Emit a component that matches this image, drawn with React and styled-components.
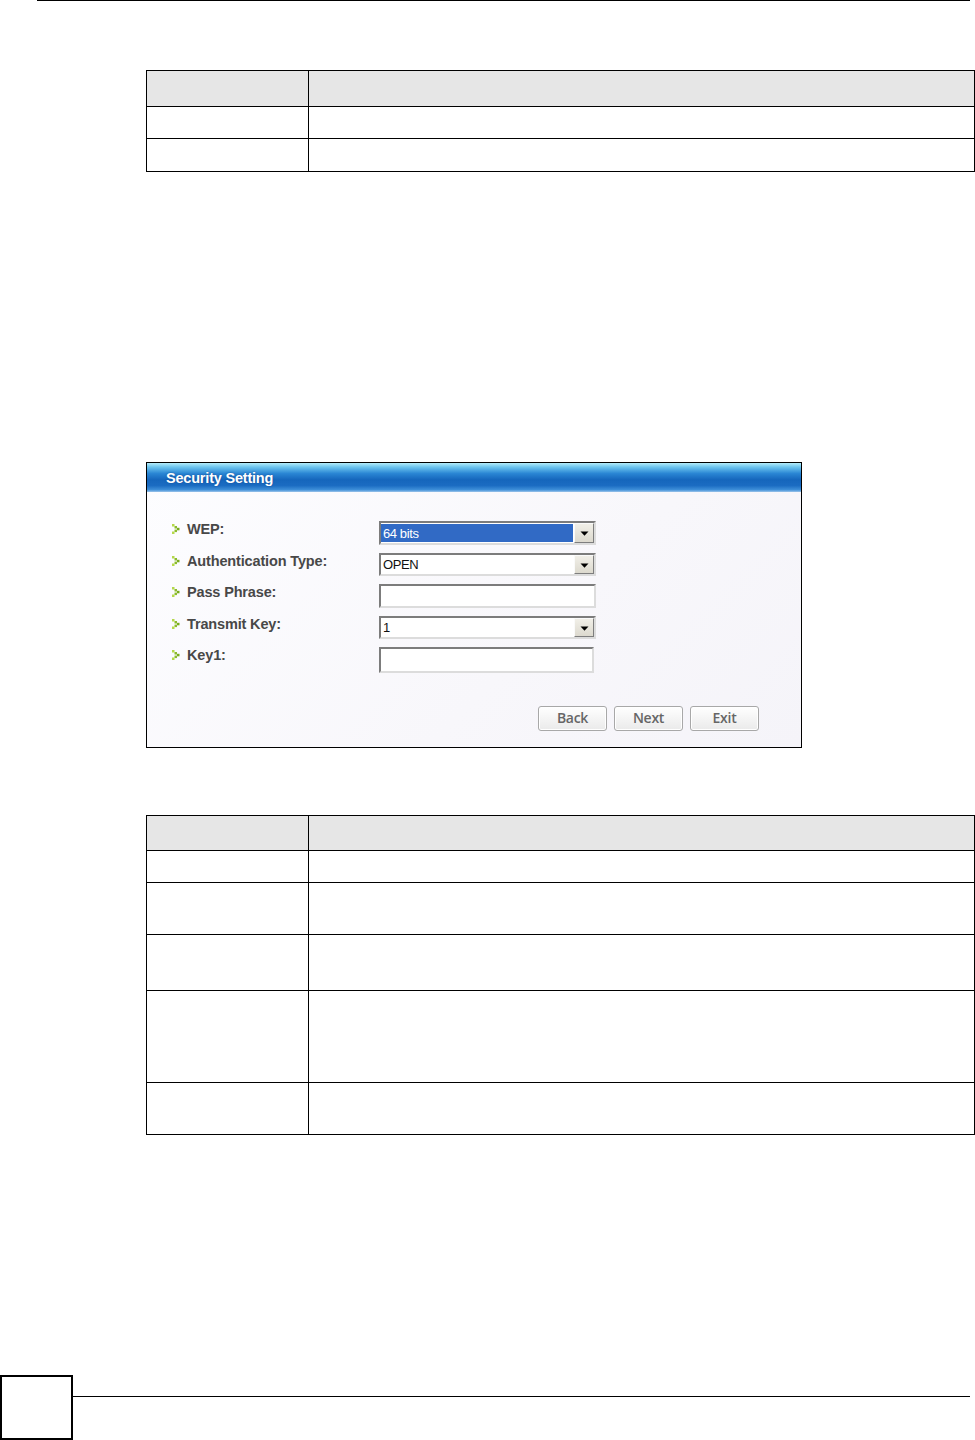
import React from 'react';
import styled, { createGlobalStyle } from 'styled-components';

const GlobalStyle = createGlobalStyle`
  html, body {
    margin: 0;
    padding: 0;
    background: #fff;
  }
  body {
    font-family: "Liberation Sans", Arial, sans-serif;
  }
`;

const Page = styled.div`
  width: 975px;
  height: 1440px;
  display: flex;
  flex-direction: column;
  overflow: hidden;
`;

const TopRule = styled.div`
  border-top: 1px solid #000;
  margin: 0 5px 0 37px;
`;

const Table = styled.table`
  border-collapse: collapse;
  table-layout: fixed;
  width: 829px;
  margin: ${(p) => p.$top}px 0 0 146px;
`;

const Row = styled.tr`
  height: ${(p) => p.$h}px;
  background: ${(p) => (p.$head ? '#e6e6e6' : '#fff')};
`;

const Cell = styled.td`
  border: 1px solid #000;
  padding: 0;
  width: ${(p) => (p.$first ? '161px' : 'auto')};
`;

const Dialog = styled.div`
  margin: 290px 0 0 146px;
  width: 656px;
  height: 286px;
  box-sizing: border-box;
  border: 1px solid #000;
  background: linear-gradient(135deg, #fdfdff 0%, #f8f7fb 60%, #f5f4f9 100%);
  display: flex;
  flex-direction: column;
`;

const TitleBar = styled.div`
  height: 29px;
  flex: none;
  display: flex;
  align-items: center;
  padding: 1px 0 0 19px;
  box-sizing: border-box;
  color: #fff;
  font: bold 14.5px "Liberation Sans", Arial, sans-serif;
  letter-spacing: -0.2px;
  text-shadow: 0 0 2px rgba(10, 60, 130, 0.7);
  background: linear-gradient(
    to bottom,
    #b4ecfa 0%,
    #6cc4ee 14%,
    #2a86d4 36%,
    #1566bc 58%,
    #1b6cc2 78%,
    #3d8ed8 92%,
    #9cc4ea 100%
  );
`;

const Body = styled.div`
  padding: 29px 42px 0 25px;
  display: flex;
  flex-direction: column;
`;

const Form = styled.div`
  display: grid;
  grid-template-columns: 207px 217px;
  row-gap: 8px;
`;

const Label = styled.div`
  display: flex;
  align-items: center;
  gap: 7px;
  align-self: start;
  line-height: 16px;
  font: bold 14.5px "Liberation Sans", Arial, sans-serif;
  color: #484848;
  letter-spacing: -0.15px;
`;

const Field = styled.div`
  box-sizing: border-box;
  width: ${(p) => p.$w || 217}px;
  height: ${(p) => p.$h}px;
  border: 2px solid;
  border-color: #7c7c7c #dcdcdc #dcdcdc #7c7c7c;
  background: #fff;
  display: flex;
  align-items: stretch;
  padding: 0 0 0 0;
`;

const Value = styled.div`
  flex: 1;
  display: flex;
  align-items: center;
  padding-left: 2px;
  margin: 1px 1px 1px 0;
  font: 13px "Liberation Sans", Arial, sans-serif;
  letter-spacing: -0.4px;
  color: ${(p) => (p.$selected ? '#fff' : '#111')};
  background: ${(p) => (p.$selected ? '#316ac5' : 'transparent')};
`;

const DropButton = styled.div`
  width: 20px;
  flex: none;
  box-sizing: border-box;
  border: 1px solid;
  border-color: #fafafa #7e7e7e #7e7e7e #fafafa;
  background: linear-gradient(#f1efe8, #dcd9ce);
  display: flex;
  align-items: center;
  justify-content: center;
  padding-top: 1px;
`;

const ButtonRow = styled.div`
  display: flex;
  justify-content: flex-end;
  gap: 7px;
  margin-top: 33px;
`;

const Button = styled.button`
  width: 69px;
  height: 25px;
  padding: 0 0 2px;
  border: 1px solid #a8a8a8;
  border-radius: 3px;
  background: linear-gradient(#ffffff, #eaeaea);
  box-shadow: inset 0 0 0 1px #fff;
  color: #666;
  font: 600 14px "Open Sans", "Liberation Sans", sans-serif;
  letter-spacing: -0.3px;
`;

const Footer = styled.div`
  margin-top: auto;
  display: flex;
  align-items: flex-start;
`;

const PageBox = styled.div`
  width: 73px;
  height: 65px;
  box-sizing: border-box;
  border: 2px solid #000;
  flex: none;
`;

const FooterRule = styled.div`
  flex: 1;
  margin: 21px 5px 0 0;
  border-top: 1px solid #000;
`;

function Chevron() {
  return (
    <svg width="8" height="10" viewBox="0 0 8 10">
      <rect x="0" y="0" width="2.5" height="2.5" fill="#b4d84a" />
      <rect x="2.5" y="2" width="2.5" height="2.5" fill="#8cbc2c" />
      <rect x="5" y="3.8" width="2.5" height="2.5" fill="#78aa1e" />
      <rect x="2.5" y="5.6" width="2.5" height="2.5" fill="#8cbc2c" />
      <rect x="0" y="7.5" width="2.5" height="2.5" fill="#b4d84a" />
    </svg>
  );
}

function Arrow() {
  return (
    <svg width="9" height="5" viewBox="0 0 9 5">
      <path d="M0.5 0.5 L8.5 0.5 L4.5 4.8 Z" fill="#000" />
    </svg>
  );
}

function Select({ value, selected, h }) {
  return (
    <Field $h={h}>
      <Value $selected={selected}>{value}</Value>
      <DropButton>
        <Arrow />
      </DropButton>
    </Field>
  );
}

const topRows = [36, 32, 33];
const bottomRows = [35, 32, 52, 56, 92, 52];

function SpecTable({ rows, top }) {
  return (
    <Table $top={top}>
      <tbody>
        {rows.map((h, i) => (
          <Row key={i} $h={h} $head={i === 0}>
            <Cell $first />
            <Cell />
          </Row>
        ))}
      </tbody>
    </Table>
  );
}

export default function App() {
  return (
    <Page>
      <GlobalStyle />
      <TopRule />
      <SpecTable rows={topRows} top={69} />

      <Dialog>
        <TitleBar>Security Setting</TitleBar>
        <Body>
          <Form>
            <Label><Chevron />WEP:</Label>
            <Select value="64 bits" selected h={24} />

            <Label><Chevron />Authentication Type:</Label>
            <Select value="OPEN" h={23} />

            <Label><Chevron />Pass Phrase:</Label>
            <Field $h={24} />

            <Label><Chevron />Transmit Key:</Label>
            <Select value="1" h={23} />

            <Label><Chevron />Key1:</Label>
            <Field $h={26} $w={215} />
          </Form>
          <ButtonRow>
            <Button>Back</Button>
            <Button>Next</Button>
            <Button>Exit</Button>
          </ButtonRow>
        </Body>
      </Dialog>

      <SpecTable rows={bottomRows} top={67} />

      <Footer>
        <PageBox />
        <FooterRule />
      </Footer>
    </Page>
  );
}
